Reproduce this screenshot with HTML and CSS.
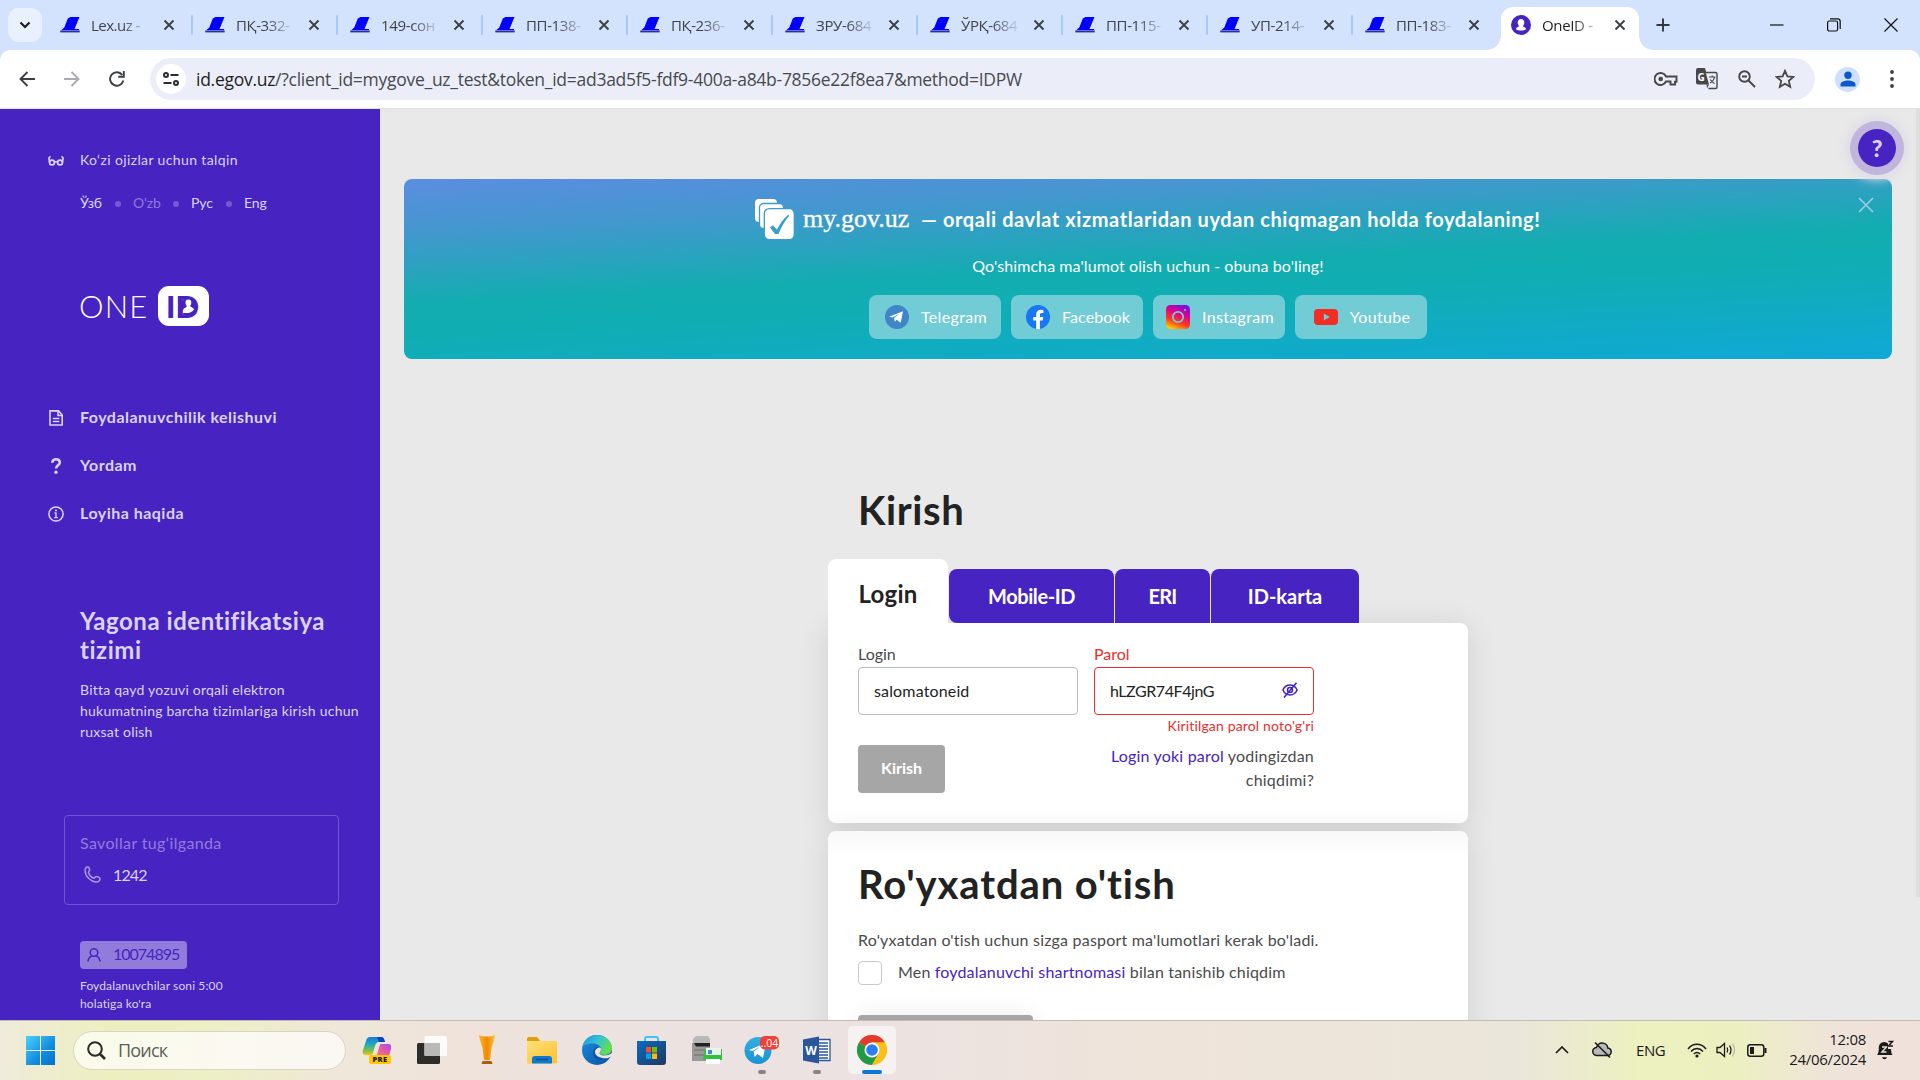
FILE: index.html
```
<!DOCTYPE html>
<html lang="uz">
<head>
<meta charset="utf-8">
<title>OneID</title>
<link rel="stylesheet" href="styles.css">
</head>
<body>
<svg width="0" height="0" class="defs" aria-hidden="true">
  <defs>
    <symbol id="lex" viewBox="0 0 20 16"><path d="M7.800 1.500L10.500 0h9L14.500 12H19v1H1.500l2.800-2.500z" fill="#00f"/><path d="M.3 13.400h19.400v2H.3z" fill="#2c2cae"/></symbol>
    <symbol id="x" viewBox="0 0 12 12"><path d="M1.500 1.500l9 9m0-9l-9 9" fill="none" stroke="#3c4043" stroke-width="1.900"/></symbol>
    <linearGradient id="win" x1="0" y1="0" x2="1" y2="1"><stop offset="0" stop-color="#4cd0ff"/><stop offset=".6" stop-color="#128be0"/><stop offset="1" stop-color="#0072cf"/></linearGradient>
    <linearGradient id="insta" x1=".7" y1="0" x2=".3" y2="1"><stop offset="0" stop-color="#7a10e0"/><stop offset=".35" stop-color="#e0008c"/><stop offset=".7" stop-color="#ff3c20"/><stop offset="1" stop-color="#ffc400"/></linearGradient>
    <linearGradient id="cpA" x1="0" y1="0" x2="0" y2="1"><stop offset="0" stop-color="#1679e0"/><stop offset=".4" stop-color="#1fa9c0"/><stop offset=".75" stop-color="#7cc04c"/><stop offset="1" stop-color="#f3c60a"/></linearGradient>
    <linearGradient id="cpB" x1="1" y1="0" x2="0" y2="1"><stop offset="0" stop-color="#a04cf0"/><stop offset=".5" stop-color="#e85aa8"/><stop offset="1" stop-color="#ff8060"/></linearGradient>
    <linearGradient id="edA" x1="0" y1="0" x2="1" y2=".5"><stop offset="0" stop-color="#1a8fd8"/><stop offset=".5" stop-color="#34c1d8"/><stop offset="1" stop-color="#62e04c"/></linearGradient>
    <linearGradient id="edB" x1="0" y1="0" x2="1" y2="1"><stop offset="0" stop-color="#1b8fe0"/><stop offset="1" stop-color="#0c4fa0"/></linearGradient>
    <linearGradient id="fold" x1="0" y1="0" x2="1" y2="1"><stop offset="0" stop-color="#ffe07a"/><stop offset="1" stop-color="#fdc12c"/></linearGradient>
    <linearGradient id="store" x1="0" y1="0" x2="1" y2="1"><stop offset="0" stop-color="#0a6cc4"/><stop offset="1" stop-color="#22365e"/></linearGradient>
    <linearGradient id="tg" x1="0" y1="0" x2="0" y2="1"><stop offset="0" stop-color="#35aee2"/><stop offset="1" stop-color="#1a93d0"/></linearGradient>
    <linearGradient id="cup" x1="0" y1="0" x2="1" y2="0"><stop offset="0" stop-color="#ffb52a"/><stop offset=".5" stop-color="#f08a00"/><stop offset="1" stop-color="#ffc23c"/></linearGradient>
  </defs>
</svg>

<div class="screen">
  <header class="tabstrip">
    <div class="tab-search"><svg width="12" height="8" viewBox="0 0 12 8"><path d="M1.500 1.500L6 6l4.500-4.500" fill="none" stroke="#1f1f1f" stroke-width="2.200"/></svg></div>
    <div class="tabs">
      <div class="tab first"><svg class="fav"><use href="#lex"/></svg><span>Lex.uz -</span><svg class="cls"><use href="#x"/></svg></div>
      <div class="tab"><svg class="fav"><use href="#lex"/></svg><span>ПҚ-332-</span><svg class="cls"><use href="#x"/></svg></div>
      <div class="tab"><svg class="fav"><use href="#lex"/></svg><span>149-сон</span><svg class="cls"><use href="#x"/></svg></div>
      <div class="tab"><svg class="fav"><use href="#lex"/></svg><span>ПП-138-</span><svg class="cls"><use href="#x"/></svg></div>
      <div class="tab"><svg class="fav"><use href="#lex"/></svg><span>ПҚ-236-</span><svg class="cls"><use href="#x"/></svg></div>
      <div class="tab"><svg class="fav"><use href="#lex"/></svg><span>ЗРУ-684</span><svg class="cls"><use href="#x"/></svg></div>
      <div class="tab"><svg class="fav"><use href="#lex"/></svg><span>ЎРҚ-684</span><svg class="cls"><use href="#x"/></svg></div>
      <div class="tab"><svg class="fav"><use href="#lex"/></svg><span>ПП-115-</span><svg class="cls"><use href="#x"/></svg></div>
      <div class="tab"><svg class="fav"><use href="#lex"/></svg><span>УП-214-</span><svg class="cls"><use href="#x"/></svg></div>
      <div class="tab nodiv"><svg class="fav"><use href="#lex"/></svg><span>ПП-183-</span><svg class="cls"><use href="#x"/></svg></div>
      <div class="tab active"><svg class="fav" viewBox="0 0 20 20"><circle cx="10" cy="10" r="10" fill="#4724c2"/><path d="M10 4a3.500 3.500 0 0 1 3.300 4c-.2 1.500-.8 2.200-1.300 3 0 1 3 1.300 3 3.200C13.500 16 6.500 16 5 14.200c0-1.900 3-2.200 3-3.200-.5-.8-1.100-1.500-1.300-3A3.500 3.500 0 0 1 10 4z" fill="#fff"/></svg><span>OneID -</span><svg class="cls"><use href="#x"/></svg></div>
    </div>
    <svg class="newtab" width="14" height="14" viewBox="0 0 14 14"><path d="M7 .5v13M.5 7h13" stroke="#33363a" stroke-width="1.900"/></svg>
    <div class="winbtns">
      <svg width="14" height="14" viewBox="0 0 14 14"><path d="M0 7h13.500" stroke="#111" stroke-width="1.200"/></svg>
      <svg width="14" height="14" viewBox="0 0 14 14"><g fill="none" stroke="#111" stroke-width="1.200"><rect x=".6" y="3" width="10" height="10" rx="1.800"/><path d="M3 .8h7.500A2.700 2.700 0 0 1 13.200 3.500V11"/></g></svg>
      <svg width="14" height="14" viewBox="0 0 14 14"><path d="M.5.5l13 13m0-13l-13 13" stroke="#111" stroke-width="1.200"/></svg>
    </div>
  </header>

  <div class="toolbar">
    <div class="nav">
      <svg width="16" height="16" viewBox="0 0 16 16"><path d="M16 8H2M8.500 1L1.500 8l7 7" fill="none" stroke="#3c4043" stroke-width="1.900"/></svg>
      <svg width="16" height="16" viewBox="0 0 16 16"><path d="M0 8h14M7.500 1l7 7-7 7" fill="none" stroke="#a9abae" stroke-width="1.900"/></svg>
      <svg width="16" height="16" viewBox="0 0 16 16"><path d="M14.300 9.500A6.700 6.700 0 1 1 13.200 4M14.800 0v5.700H9.200" fill="none" stroke="#3c4043" stroke-width="1.900"/></svg>
    </div>
    <div class="omnibox">
      <div class="siteinfo"><svg width="16" height="14" viewBox="0 0 16 14"><g fill="none" stroke="#2b2d30" stroke-width="2"><circle cx="3" cy="3" r="2"/><path d="M7.500 3H15.500"/><circle cx="13" cy="11" r="2"/><path d="M.5 11h8"/></g></svg></div>
      <div class="url"><b>id.egov.uz</b>/?client_id=mygove_uz_test&amp;token_id=ad3ad5f5-fdf9-400a-a84b-7856e22f8ea7&amp;method=IDPW</div>
      <div class="omni-icons">
        <svg width="24" height="20" viewBox="0 0 24 20"><path d="M12 7.500A6 6 0 1 0 12 12.500h2.500v0h2v3h4.500v-2.800h1.500V7.500z" fill="none" stroke="#474747" stroke-width="1.900"/><circle cx="6.700" cy="10" r="2.300" fill="#474747"/></svg>
        <svg width="22" height="22" viewBox="0 0 22 22"><path d="M2.500 1h6l1 3.500h10a1.500 1.500 0 0 1 1.500 1.500v13a1.500 1.500 0 0 1-1.500 1.500h-7" fill="none" stroke="#474747" stroke-width="1.400"/><path d="M2 0h6.500l4.500 16.500H2a2 2 0 0 1-2-2V2a2 2 0 0 1 2-2z" fill="#474747"/><path d="M10.500 16.500h2.500l-2 4z" fill="#474747"/><text x="1.600" y="12.500" font-size="10" font-weight="700" fill="#fff" font-family="Open Sans, sans-serif">G</text><path d="M13 9h6.500M16.200 7.500V9M18.500 9c-.5 3-2.500 5-4.500 6M14.300 11.500c1 2 2.500 3 4.200 4" fill="none" stroke="#474747" stroke-width="1.200"/></svg>
        <svg width="20" height="20" viewBox="0 0 20 20"><g fill="none" stroke="#474747" stroke-width="1.900"><circle cx="7.500" cy="7.500" r="5.300"/><path d="M11.500 11.500l6.500 6.500M5 7.500h5"/></g></svg>
        <svg width="20" height="20" viewBox="0 0 20 20"><path d="M10 1.800l2.400 5.600 6 .5-4.600 4 1.400 5.900L10 14.700l-5.200 3.100 1.400-5.900-4.600-4 6-.5z" fill="none" stroke="#474747" stroke-width="1.800"/></svg>
      </div>
    </div>
    <div class="profile"><svg width="16" height="16" viewBox="0 0 16 16"><circle cx="8" cy="4.200" r="3.700" fill="#0b57d0"/><path d="M.5 15.500v-2C.5 10.500 5 9.500 8 9.500s7.500 1 7.500 4v2z" fill="#0b57d0"/></svg></div>
    <svg class="kebab" width="4" height="18" viewBox="0 0 4 18"><g fill="#3c4043"><circle cx="2" cy="2" r="1.900"/><circle cx="2" cy="9" r="1.900"/><circle cx="2" cy="16" r="1.900"/></g></svg>
  </div>

  <div class="page">
    <aside class="sidebar">
      <div class="row a11y"><svg width="16" height="10" viewBox="0 0 16 10"><g fill="none" stroke="#dad3f3" stroke-width="1.700"><circle cx="4" cy="6.500" r="2.400"/><circle cx="12" cy="6.500" r="2.400"/><path d="M6.400 6.200q1.600-.9 3.200 0M1.600 6.500L1 2.500Q1 .9 2.600.9M14.400 6.500l.6-4Q15 .9 13.400.9"/></g></svg><span>Ko‘zi ojizlar uchun talqin</span></div>
      <div class="langs"><span class="l22">Ўзб</span><i></i><span class="cur">O'zb</span><i></i><span class="l22">Рус</span><i></i><span>Eng</span></div>
      <div class="logo"><span class="one">ONE</span><span class="idbox"><span class="idtext">ID</span><svg class="idman" width="14" height="18" viewBox="0 0 14 18"><rect x="0" y="1" width="13" height="16" rx="3" fill="#4724c2"/><path d="M6.300 1.500a2.900 2.900 0 0 1 3 2.900c0 1.400-.5 2.500-1.100 3.300 0 1.500 3.800 1.900 3.800 3.800C10.500 13.700 8 15 6 15H.8c0-2.300.3-3.900 1.500-4.700S4.800 9.200 4.800 7.700C4 6.900 3.500 5.800 3.500 4.400a2.800 2.800 0 0 1 2.800-2.900z" fill="#fff"/></svg></span></div>
      <nav class="menu">
        <div class="row"><svg width="16" height="16" viewBox="0 0 16 16"><g fill="none" stroke="#dad3f3" stroke-width="1.600"><path d="M2 .9h8.500L14.200 5v10H2zM10 1v4.500h4"/><path d="M4.800 8.500h6.500M4.800 11.500h6.500"/></g></svg><span>Foydalanuvchilik kelishuvi</span></div>
        <div class="row"><svg width="16" height="16" viewBox="0 0 16 16"><path d="M4.300 4.800C4.300 2.500 5.800 1.300 8 1.300s3.800 1.300 3.800 3.300c0 2.800-3.800 2.700-3.800 6" fill="none" stroke="#dad3f3" stroke-width="2.600"/><circle cx="8" cy="14.200" r="1.700" fill="#dad3f3"/></svg><span>Yordam</span></div>
        <div class="row"><svg width="16" height="16" viewBox="0 0 16 16"><circle cx="8" cy="8" r="7.100" fill="none" stroke="#dad3f3" stroke-width="1.500"/><circle cx="8" cy="4.600" r="1" fill="#dad3f3"/><path d="M6.500 7H8v4.700M6.200 11.700h3.600" fill="none" stroke="#dad3f3" stroke-width="1.300"/></svg><span>Loyiha haqida</span></div>
      </nav>
      <h2 class="about">Yagona identifikatsiya tizimi</h2>
      <p class="desc">Bitta qayd yozuvi orqali elektron<br>hukumatning barcha tizimlariga kirish uchun<br>ruxsat olish</p>
      <div class="contact">
        <div class="q">Savollar tug‘ilganda</div>
        <div class="phone"><svg width="17" height="17" viewBox="0 0 17 17"><path d="M1.200 3.300C1.500 1.800 3 .9 4 1c1.300.2 1.800 2.500 1.500 3.500-.2.900-1.200 1.100-1 2.200.4 2 2.700 4.700 5 5.300 1.100.3 1.500-.8 2.500-1.300 1.500-.4 3.800.8 4 1.800.2 1.200-.8 2.600-2.200 3.200C7.500 17.200.2 10 1.200 3.300z" fill="none" stroke="#a898e2" stroke-width="1.500"/></svg><span>1242</span></div>
      </div>
      <div class="counter"><svg width="14" height="14" viewBox="0 0 14 14"><g fill="none" stroke="#4724c2" stroke-width="1.500"><circle cx="7" cy="4.500" r="3.800"/><path d="M.8 13.500C1.500 10.500 3.500 8.300 5 8M13.200 13.500C12.500 10.500 10.500 8.300 9 8"/></g></svg><span>10074895</span></div>
      <p class="asof">Foydalanuvchilar soni 5:00<br>holatiga ko'ra</p>
    </aside>

    <main class="main">
      <section class="banner">
        <svg class="bclose" width="16" height="16" viewBox="0 0 16 16"><path d="M1 1l14 14m0-14L1 15" stroke="#9fcdea" stroke-width="1.500"/></svg>
        <div class="headline">
          <svg width="40" height="41" viewBox="0 0 40 41"><g fill="#fff"><rect x="0" y="0" width="22" height="23" rx="4"/></g><g fill="#fff" stroke="#3d9ccb" stroke-width="1.300"><rect x="4.500" y="4.500" width="24" height="25" rx="4"/><rect x="9.300" y="9.600" width="30" height="31" rx="5"/></g><path d="M15 28.500l3-2.300 4 4.300c3-6 6.500-11 11.500-15l.5 1.500c-4 4.500-7.500 10.500-10.500 18h-3.500z" fill="#3a9fc8"/></svg>
          <span class="mygov">my.gov.uz</span><span class="slogan">— orqali davlat xizmatlaridan uydan chiqmagan holda foydalaning!</span>
        </div>
        <div class="sub">Qo'shimcha ma'lumot olish uchun - obuna bo'ling!</div>
        <div class="socials">
          <div class="soc"><svg width="24" height="24" viewBox="0 0 24 24"><circle cx="12" cy="12" r="12" fill="#3f86c8"/><path d="M4 11.700l14-5.400-2.300 11.500-4-3-2 2-.6-3.800 5.500-4.500-7 4z" fill="#fff"/></svg><span>Telegram</span></div>
          <div class="soc"><svg width="24" height="24" viewBox="0 0 24 24"><circle cx="12" cy="12" r="12" fill="#1877f2"/><path d="M16.700 15.500l.5-3.500h-3.300V9.800c0-1 .5-1.900 2-1.900h1.500V5s-1.400-.3-2.700-.3c-2.700 0-4.500 1.700-4.500 4.700V12h-3v3.500h3V24h3.700v-8.500z" fill="#fff"/></svg><span class="fb">Facebook</span></div>
          <div class="soc"><svg width="24" height="24" viewBox="0 0 24 24"><rect width="24" height="24" rx="4.500" fill="url(#insta)"/><circle cx="12" cy="12" r="5.200" fill="none" stroke="#79c8d8" stroke-width="1.800"/><circle cx="19" cy="5" r="1" fill="#79c8d8"/></svg><span>Instagram</span></div>
          <div class="soc"><svg width="24" height="16" viewBox="0 0 24 16"><rect width="24" height="16" rx="4" fill="#f02e24"/><path d="M9.800 4.600v6.800l6-3.400z" fill="#70cbd6"/></svg><span>Youtube</span></div>
        </div>
      </section>

      <div class="column">
        <h1 class="title">Kirish</h1>
        <div class="authtabs"><div class="at on">Login</div><div class="at mob">Mobile-ID</div><div class="at eri">ERI</div><div class="at idk">ID-karta</div></div>
        <section class="card login">
          <div class="field">
            <label class="lbl">Login</label>
            <div class="input">salomatoneid</div>
            <div class="btn">Kirish</div>
          </div>
          <div class="field err">
            <label class="lbl">Parol</label>
            <div class="input"><span class="pw">hLZGR74F4jnG</span><svg width="16" height="16" viewBox="0 0 16 16"><g fill="none" stroke="#4724c2" stroke-width="1.600"><path d="M.9 8C2.500 4.500 5 3 8 3s5.500 1.500 7.100 5c-1.600 3.500-4.100 5-7.100 5S2.500 11.500.9 8z"/><circle cx="8" cy="8" r="2.500"/><path d="M14.500.8L2 15.500"/></g></svg></div>
            <div class="msg">Kiritilgan parol noto'g'ri</div>
            <div class="forgot"><a>Login yoki parol</a> yodingizdan<br>chiqdimi?</div>
          </div>
        </section>
        <section class="card reg">
          <h1 class="title regt">Ro'yxatdan o'tish</h1>
          <p class="need">Ro'yxatdan o'tish uchun sizga pasport ma'lumotlari kerak bo'ladi.</p>
          <div class="agree"><i class="box"></i><span>Men <a>foydalanuvchi shartnomasi</a> bilan tanishib chiqdim</span></div>
          <div class="regbtn"></div>
        </section>
      </div>
      <div class="help">?</div>
      <div class="thumb"></div>
    </main>
  </div>

  <footer class="taskbar">
    <svg class="start" width="29" height="29" viewBox="0 0 29 29"><path d="M0 0h14v14H0zM15 0h14v14H15zM0 15h14v14H0zM15 15h14v14H15z" fill="url(#win)"/></svg>
    <div class="search"><svg width="19" height="19" viewBox="0 0 19 19"><g fill="none" stroke="#2a2a28"><circle cx="8" cy="8" r="6.800" stroke-width="2"/><path d="M13 13l5 5" stroke-width="2.600"/></g></svg><span>Поиск</span></div>
    <div class="apps">
      <div class="app"><svg width="30" height="30" viewBox="0 0 30 30"><path d="M8 2h11c2 0 3 1 4 5h-6c-2 0-3 1-4 4l-2 7c-.5 1.500-1 2-3 2H4c-3 0-4-2-3-5L4 6c.8-3 2-4 4-4z" fill="url(#cpA)"/><path d="M15 2h4c2 0 3 1 4 5h-6z" fill="#0c43c0"/><path d="M19 9h7c3 0 3.500 2 3 5l-2 7H12c2 0 3-1 3.500-3l2-7c.3-1 .5-2 1.500-2z" fill="url(#cpB)"/><rect x="7" y="20" width="22" height="9" rx="2" fill="#ffc60a"/><text x="18" y="27.400" text-anchor="middle" class="pre">PRE</text></svg></div>
      <div class="app"><svg width="30" height="30" viewBox="0 0 30 30"><rect x="0" y="8" width="23" height="21" rx="1.500" fill="#2c2c2a"/><rect x="7.500" y="1" width="22.500" height="20" rx="1.500" fill="#fbfbfb"/><rect x="7.500" y="8" width="15.500" height="13" fill="#b9b9b7"/></svg></div>
      <div class="app"><svg width="18" height="30" viewBox="0 0 18 30"><path d="M1 0c5 2 11 2 16 0-.5 4-2 8-3.500 13L12 25H6L4.500 13C3 8 1.500 4 1 0z" fill="url(#cup)"/><path d="M4.500 26h9l1 3h-11z" fill="#b05a10"/></svg></div>
      <div class="app"><svg width="30" height="27" viewBox="0 0 30 27"><path d="M0 2q0-2 2-2h8l3 3.500V7H0z" fill="#e0a008"/><path d="M0 4h28q2 0 2 2v19q0 1.500-1.500 1.500h-27Q0 26.500 0 25z" fill="url(#fold)"/><path d="M5 26.500V22q0-3 3-3h14q3 0 3 3v4.500z" fill="#0f78d0"/><path d="M9 22.500h12" stroke="#0a5290" stroke-width="1.500"/></svg></div>
      <div class="app"><svg width="30" height="30" viewBox="0 0 30 30"><circle cx="15" cy="15" r="15" fill="url(#edB)"/><path d="M.3 12C2 4 8 0 15 0c9 0 15 6.500 15 13 0 5-4 7-8 7-3 0-4.500-1-4.500-2 0-.8 1.500-1.500 1.500-4 0-3-3.500-5.500-8-5.500C6 8.500 2 10 .3 12z" fill="url(#edA)"/><path d="M19 14c0 2.500-1.500 3.200-1.500 4.200 0 1.200 1.500 2.300 4.500 2.300 2 0 4-.4 5.500-1.400.6-.2 1 .2.700.8C26 23.500 22 25 18 25c-4.500 0-7.500-4-7-8 .3-3 2.500-5 5-5s3 1 3 2z" fill="#0d57a8"/><path d="M19 14c0 2.500-1.500 3.200-1.500 4.200 0 1.200 1.500 2.300 4.500 2.300 2.700 0 5-.7 8-2.500v3l-4 2c-5 1-13-1-13-6 0-2 1.500-4 4-4.500 1.200 0 2 .5 2 1.500z" fill="#efe5e0"/></svg></div>
      <div class="app"><svg width="29" height="29" viewBox="0 0 29 29"><path d="M8 7V3q0-2 2-2h9q2 0 2 2v4" fill="none" stroke="#3cc5f5" stroke-width="2"/><path d="M0 5h29v21q0 3-3 3H3q-3 0-3-3z" fill="url(#store)"/><path d="M9 11h5v5.500H9z" fill="#f25022"/><path d="M15 11h5v5.500h-5z" fill="#7fba00"/><path d="M9 17.500h5V23H9z" fill="#00a4ef"/><path d="M15 17.500h5V23h-5z" fill="#ffb900"/></svg></div>
      <div class="app"><svg width="30" height="29" viewBox="0 0 30 29"><path d="M1 3l3-3h12l2 3v4H1z" fill="#b9b9b9"/><path d="M0 7h18v18H0z" fill="#9a9a98"/><path d="M2 7h16v3.500H4z" fill="#222"/><path d="M2 14h14M2 19h12" stroke="#6f6f6f"/><path d="M13 13h17v11H11z" fill="#2fc23a"/><path d="M14 12h15v7H14z" fill="#e8f6ee"/><path d="M16 14h4v4h-4z" fill="#3f8fd0"/><path d="M14 23h14v5H14z" fill="#fff"/></svg></div>
      <div class="app run"><svg width="36" height="30" viewBox="0 0 36 30"><circle cx="14" cy="15.500" r="13.500" fill="url(#tg)"/><path d="M5 15l17-7-3 15-5.500-4-3 3-.7-5.500 7-5.500-8.300 5z" fill="#fff"/><rect x="16" y="1" width="19" height="13.500" rx="5" fill="#f04038"/><text x="25.500" y="11.800" text-anchor="middle" class="badge">..04</text></svg></div>
      <div class="app run"><svg width="28" height="28" viewBox="0 0 28 28"><path d="M14 3.500h13v21H14z" fill="#fff" stroke="#2b579a" stroke-width="1.300"/><path d="M16 7h9M16 10h9M16 13h9M16 16h9M16 19h9M16 22h9" stroke="#2b579a" stroke-width="1.300"/><path d="M0 3.500L16 .5v27l-16-3z" fill="#2b579a"/><text x="8" y="18.500" text-anchor="middle" class="w">W</text></svg></div>
      <div class="app on"><svg width="30" height="30" viewBox="0 0 30 30"><circle cx="15" cy="15" r="15" fill="#fbc116"/><path d="M15 15L2 7.500A15 15 0 0 1 28 7.500H15z" fill="#e33b2e"/><path d="M15 15L2 7.500A15 15 0 0 0 15 30l6.500-11.300z" fill="#229a48"/><path d="M15 7.500h13a15 15 0 0 1-13 22.500l6.500-11.300z" fill="#fbc116"/><circle cx="15" cy="15" r="7.500" fill="#fff"/><circle cx="15" cy="15" r="5.800" fill="#2b7cf0"/></svg></div>
    </div>
    <div class="tray">
      <svg width="14" height="8" viewBox="0 0 14 8"><path d="M1 7l6-6 6 6" fill="none" stroke="#1b1b1b" stroke-width="1.700"/></svg>
      <svg class="cloud" width="20" height="16" viewBox="0 0 20 16"><path d="M5 13.500a4 4 0 0 1-.5-8C5 3 7.500 1 10 1c3 0 5.500 2 5.800 5 2 .3 3.400 1.800 3.400 3.700a3.800 3.800 0 0 1-3.800 3.800z" fill="#b7b9ba" stroke="#1b1b1b" stroke-width="1.500"/><path d="M3 .5l15 15" stroke="#1b1b1b" stroke-width="1.500"/></svg>
      <span class="lang">ENG</span>
      <svg class="wifi" width="20" height="15" viewBox="0 0 20 15"><g fill="none" stroke="#1b1b1b" stroke-width="1.500"><path d="M1 6C6-.3 14-.3 19 6M4 8.500c3.500-4 8.500-4 12 0M6.800 11c2-2 4.400-2 6.400 0"/></g><circle cx="10" cy="13" r="1.600" fill="#1b1b1b"/></svg>
      <svg class="vol" width="20" height="16" viewBox="0 0 20 16"><g fill="none" stroke="#1b1b1b" stroke-width="1.300"><path d="M1 5.500h3L8.500 1.500v13L4 10.500H1z"/><path d="M11 5.500q1.500 2.500 0 5M13.500 3.500q3 4.500 0 9"/><path d="M16.500 1.500q4 6.500 0 13" stroke="#b9b8a5"/></g></svg>
      <svg class="bat" width="20" height="13" viewBox="0 0 20 13"><rect x=".8" y=".8" width="16" height="11.400" rx="2.500" fill="none" stroke="#1b1b1b" stroke-width="1.500"/><rect x="3" y="3" width="4" height="7" fill="#1b1b1b"/><path d="M18.500 4v5" stroke="#1b1b1b" stroke-width="2"/></svg>
      <div class="clock"><span>12:08</span><span class="date">24/06/2024</span></div>
      <svg class="bell" width="18" height="20" viewBox="0 0 18 20"><path d="M1 15c1.500-1.500 1.800-4 1.800-7A5.500 5.500 0 0 1 12 3.500V9h3c.2 2.500.5 5 1.500 6zM6 17.300h5q-.5 2-2.500 2T6 17.300z" fill="#1b1b1b"/><path d="M6 7h4.500L6 12h4.500" fill="none" stroke="#eee5da" stroke-width="1.400"/><path d="M12.500 1.500h4L12.500 6h4.500" fill="none" stroke="#1b1b1b" stroke-width="1.500"/></svg>
    </div>
  </footer>
</div>
</body>
</html>
```
FILE: styles.css
```
* { box-sizing: border-box; }
body { margin: 0; font-family: Lato, "Open Sans", sans-serif; }
h1, h2, p { margin: 0; }
svg { display: block; flex: none; }
.defs { position: absolute; }
.screen { width: 1920px; height: 1080px; overflow: hidden; display: flex; flex-direction: column; }

/* browser chrome */
.tabstrip { flex: none; height: 50px; background: #d3e3fd; display: flex; align-items: center; font-family: "Open Sans", sans-serif; }
.tab-search { width: 34px; height: 34px; margin-left: 8px; border-radius: 11px; background: #e9f1fe; display: flex; align-items: center; justify-content: center; }
.tabs { display: flex; align-self: stretch; margin-left: 5px; }
.tab { position: relative; width: 145px; display: flex; align-items: center; padding-left: 13px; }
.tab::after { content: ""; position: absolute; right: -1px; top: 15px; width: 2px; height: 20px; border-radius: 1px; background: #a8c7fa; }
.tab.nodiv::after { display: none; }
.fav { width: 20px; height: 16px; }
.tab span { width: 62px; margin-left: 11px; white-space: nowrap; font-size: 15px; line-height: 24px; letter-spacing: -.35px; color: #40444a; -webkit-mask-image: linear-gradient(90deg, #000 50%, rgba(0,0,0,.15) 90%); mask-image: linear-gradient(90deg, #000 50%, rgba(0,0,0,.15) 90%); }
.tab.first span { letter-spacing: -.5px; }
.cls { width: 12px; height: 12px; margin-left: 10px; }
.tab.active { height: 43px; margin: 7px 0 0 4px; width: 138px; background: #fff; border-radius: 12px 12px 0 0; padding: 0 0 7px 10px; }
.tab.active .fav { height: 20px; }
.tab.active span { color: #1f1f1f; }
.tab.active::before, .tab.active::after { content: ""; position: absolute; top: auto; bottom: 0; width: 14px; height: 14px; border-radius: 0; }
.tab.active::before { left: -14px; background: radial-gradient(circle at 0 0, #d3e3fd 13.5px, #fff 14px); }
.tab.active::after { right: -14px; background: radial-gradient(circle at 100% 0, #d3e3fd 13.5px, #fff 14px); }
.newtab { margin-left: 17px; }
.winbtns { margin-left: auto; margin-right: 22px; display: flex; gap: 43px; }

.toolbar { flex: none; height: 59px; background: radial-gradient(circle at 100% 100%, transparent 9.5px, #d3e3fd 10px) 0 0 / 10px 10px no-repeat, radial-gradient(circle at 0 100%, transparent 9.5px, #d3e3fd 10px) 100% 0 / 10px 10px no-repeat, #fff; border-bottom: 1px solid #dfe1e5; display: flex; align-items: center; }
.nav { display: flex; gap: 29px; margin-left: 19px; }
.omnibox { width: 1665px; height: 42px; margin-left: 25px; border-radius: 21px; background: #ebeef8; display: flex; align-items: center; padding: 0 20px 0 6px; }
.siteinfo { width: 30px; height: 30px; border-radius: 50%; background: #fff; display: flex; align-items: center; justify-content: center; }
.url { margin-left: 10px; font: 17.5px/24px "Open Sans", sans-serif; letter-spacing: -.275px; color: #474a4f; white-space: nowrap; }
.url b { font-weight: 400; color: #1f1f1f; }
.omni-icons { margin-left: auto; display: flex; align-items: center; gap: 18.500px; }
.profile { width: 25px; height: 25px; margin-left: 20px; border-radius: 50%; background: #cfe0fc; display: flex; align-items: center; justify-content: center; }
.kebab { margin-left: 30px; }

/* page */
.page { flex: none; height: 911px; display: flex; overflow: hidden; }
.sidebar { width: 380px; flex: none; background: #4724c2; color: #dad3f3; padding: 41px 0 0 80px; }
.row { display: flex; align-items: center; margin-left: -32px; gap: 16px; }
.row span { padding-bottom: 3px; }
.a11y { height: 22px; font-size: 14px; letter-spacing: .38px; }
.langs { margin-top: 21px; height: 20px; display: flex; align-items: center; font-size: 14px; line-height: 20px; letter-spacing: -.1px; }
.langs i { width: 6px; height: 6px; border-radius: 50%; background: #7558d4; margin: 2px 12.500px 0; }
.l22 { width: 22px; }
.langs .cur { width: 27px; color: #8e79db; }
.logo { margin-top: 73px; height: 40px; display: flex; align-items: center; color: #fff; }
.one { width: 78px; font-weight: 300; font-size: 31px; line-height: 40px; letter-spacing: 1.200px; margin-left: -1px; margin-right: 1px; }
.idbox { position: relative; width: 51px; height: 40px; border-radius: 11px; background: #fff; color: #4724c2; }
.idtext { position: absolute; left: 8px; top: 0; font-weight: 900; font-size: 31px; line-height: 40px; }
.idman { position: absolute; left: 24px; top: 12px; }
.menu { margin-top: 68px; }
.menu .row { height: 48px; font-weight: 700; font-size: 16px; letter-spacing: .48px; }
.about { margin-top: 69px; width: 280px; font-size: 24px; line-height: 28.8px; letter-spacing: .53px; }
.desc { margin-top: 14px; font-size: 14px; line-height: 21px; letter-spacing: .23px; white-space: nowrap; }
.contact { margin: 73px 0 0 -16px; width: 275px; height: 90px; border: 1px solid #6f54d0; border-radius: 4px; padding: 15px 15px; }
.q { line-height: 24px; font-size: 16px; letter-spacing: .35px; color: #917cdb; }
.phone { margin-top: 8px; display: flex; align-items: center; gap: 12px; padding-left: 4px; font-size: 16px; line-height: 24px; letter-spacing: -.9px; }
.counter { margin-top: 36px; width: 107px; height: 28px; border-radius: 4px; background: #917cdb; color: #4724c2; display: flex; align-items: center; gap: 12px; padding-left: 7px; letter-spacing: -1px; font-size: 16px; }
.counter span { padding-bottom: 2px; }
.asof { margin-top: 8px; font-size: 12px; line-height: 18px; letter-spacing: .12px; }

.main { position: relative; flex: 1; background: #e9e9e9; padding: 70px 28px 0 24px; }
.banner { position: relative; height: 180px; border-radius: 8px; color: #fff; background: linear-gradient(177deg, #5b8de0 0%, #4497cf 20%, #12adb0 49%, #10aeb4 62%, #10a8d6 100%); padding-top: 18px; }
.bclose { position: absolute; right: 18px; top: 18px; }
.headline { display: flex; align-items: center; height: 44px; margin-left: 351px; }
.mygov { margin-left: 8px; width: 107px; font: 26px/32px "Liberation Serif", serif; -webkit-text-stroke: .3px #fff; padding-bottom: 1px; }
.slogan { margin-left: 11px; font-size: 20px; font-weight: 700; letter-spacing: .58px; white-space: nowrap; padding-bottom: 1px; }
.sub { margin-top: 13px; line-height: 24px; text-align: center; font-size: 16px; letter-spacing: .09px; }
.socials { margin-top: 17px; display: flex; justify-content: center; gap: 10px; }
.soc { width: 132px; height: 44px; border-radius: 8px; background: #71ccd6; display: flex; align-items: center; justify-content: center; gap: 12px; padding-left: 2px; font-size: 16px; letter-spacing: .34px; }
.soc span { padding-bottom: 2px; }
.soc .fb { letter-spacing: .12px; }

.column { width: 640px; margin: 127px 0 0 424px; }
.title { margin-left: 30px; font-size: 40px; line-height: 48px; letter-spacing: .6px; color: #222; }
.authtabs { margin-top: 25px; display: flex; align-items: flex-end; gap: 1px; height: 64px; }
.at { height: 54px; border-radius: 8px 8px 0 0; background: #4724c2; color: #fff; font-weight: 700; font-size: 20px; line-height: 54px; text-align: center; }
.on.at { position: relative; z-index: 1; width: 120px; height: 64px; background: #fff; color: #222; font-size: 24px; line-height: 70px; letter-spacing: .2px; }
.mob { width: 165px; letter-spacing: -.42px; border-bottom-left-radius: 8px; }
.eri { width: 95px; letter-spacing: -.76px; }
.idk { width: 148px; }
.card { border-radius: 0 8px 8px 8px; background: #fff; box-shadow: 0 4px 32px rgba(0,0,0,.11); padding: 20px 30px 0; color: #4a4a4a; }
.login { height: 200px; display: flex; gap: 16px; }
.field { width: 220px; }
.lbl { display: block; height: 24px; font-size: 16px; line-height: 22px; }
.input { height: 48px; border: 1px solid #bdbdbd; border-radius: 4px; padding: 0 15px 2px; font-size: 16px; letter-spacing: .15px; color: #222; display: flex; align-items: center; justify-content: space-between; }
.btn { margin-top: 30px; width: 87px; height: 48px; border-radius: 4px; background: #a6a6a6; color: #fff; font-weight: 700; font-size: 16px; line-height: 46px; text-align: center; }
.err .lbl, .msg { color: #ee2c2c; }
.err .input { border-color: #ee2c2c; }
.pw { letter-spacing: -.44px; }
.msg { height: 22px; font-size: 14px; line-height: 22px; text-align: right; letter-spacing: .16px; }
.forgot { margin-top: 7px; font-size: 16px; line-height: 24px; letter-spacing: .2px; text-align: right; white-space: nowrap; }
.card a { color: #4724c2; }
.reg { margin-top: 8px; height: 240px; border-radius: 8px; padding-top: 29px; background: linear-gradient(#f8f8f8, #fff 24px); }
.regt { margin-left: 0; letter-spacing: .88px; }
.need { margin-top: 20px; font-size: 16px; line-height: 24px; letter-spacing: .2px; }
.agree { margin-top: 9px; display: flex; align-items: center; gap: 16px; font-size: 16px; line-height: 22px; letter-spacing: .17px; }
.agree span { padding-bottom: 2px; }
.box { width: 24px; height: 24px; border: 1px solid #c9c9c9; border-radius: 4px; }
.regbtn { margin-top: 30px; width: 175px; height: 48px; border-radius: 4px; background: #a6a6a6; box-shadow: 0 0 24px rgba(0,0,0,.08); }
.help { position: absolute; left: 1478px; top: 20px; width: 38px; height: 38px; border-radius: 50%; background: #4724c2; color: #dad3f3; font-size: 23px; font-weight: 900; line-height: 38px; text-align: center; box-shadow: 0 0 0 8px #bfb5dd, 0 0 10px 13px #e0dde7; }
.thumb { position: absolute; right: 0; top: 0; width: 4px; height: 788px; background: #dedede; }

/* taskbar */
.taskbar { flex: none; height: 60px; border-top: 1px solid #c2bbb2; padding-bottom: 1px; display: flex; align-items: center; font-family: "Open Sans", sans-serif; color: #1b1b1b; background: linear-gradient(90deg, #efebdb 0, #edefbf 110px, #edefc6 220px, #efe7da 340px, #efe3da 450px, #ece2e0 640px, #ece2e2 850px, #efe4da 1150px, #ebe6da 1520px, #ecf1bf 1640px, #ecf0c0 1730px, #efe4d9 1830px, #f0e0da 1920px); }
.start { margin-left: 26px; }
.search { margin-left: 18px; width: 273px; height: 39px; border-radius: 20px; border: 1px solid #d8d6c0; background: linear-gradient(90deg, #fafbea, #fbf7f4); display: flex; align-items: center; padding-left: 13px; gap: 12px; font-size: 18px; letter-spacing: -.8px; color: #5d5f58; }
.apps { display: flex; margin-left: 3px; }
.app { position: relative; width: 55px; height: 48px; display: flex; align-items: center; justify-content: center; }
.app svg { position: relative; }
.app.on::before { content: ""; position: absolute; inset: 0 3px 0 4px; border-radius: 5px; background: #f6f2f1; }
.app.run::after, .app.on::after { content: ""; position: absolute; left: 24px; bottom: 0; width: 8px; height: 4px; border-radius: 2px; background: #8a8583; }
.app.on::after { left: 18px; width: 20px; background: #0a78d4; }
.pre { font: 800 7.5px "Open Sans", sans-serif; letter-spacing: .4px; fill: #1b1b1b; }
.badge { font: 400 10.5px "Open Sans", sans-serif; fill: #fff; }
.w { font: 700 12px "Open Sans", sans-serif; fill: #fff; }
.tray { margin-left: auto; margin-right: 26px; display: flex; align-items: center; }
.cloud { margin-left: 23px; }
.lang { margin-left: 24px; width: 29px; font-size: 15px; letter-spacing: -.4px; padding-bottom: 1px; }
.wifi { margin-left: 22px; }
.vol { margin-left: 9px; }
.bat { margin-left: 11px; }
.clock { margin-left: 21px; width: 78px; padding-bottom: 3px; display: flex; flex-direction: column; align-items: flex-end; font-size: 15px; line-height: 20px; letter-spacing: -.28px; }
.bell { margin-left: 10px; }
```
